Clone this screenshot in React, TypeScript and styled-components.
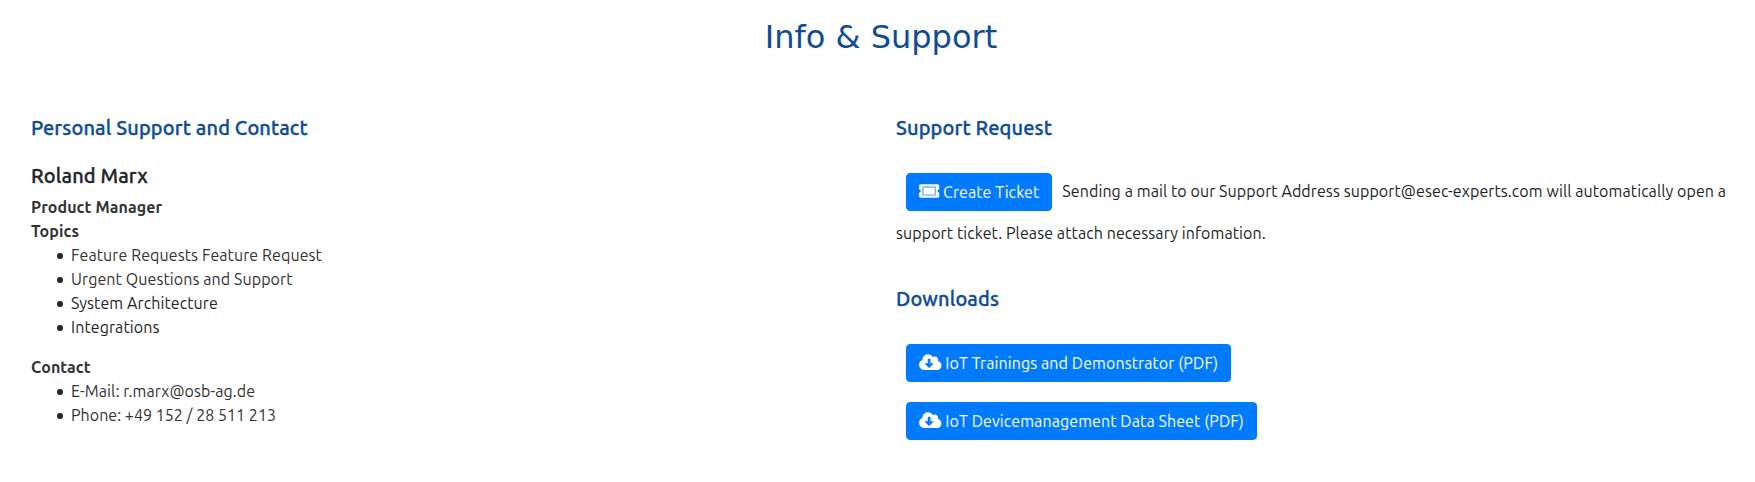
import React from "react";
import styled, { createGlobalStyle } from "styled-components";

const GlobalStyle = createGlobalStyle`
  *, *::before, *::after { box-sizing: border-box; }
  body {
    margin: 0;
    background: #fff;
    color: #212529;
    font: 400 16px/24px "Ubuntu", "Noto Sans", sans-serif;
    letter-spacing: 0.09px;
  }
`;

const Page = styled.main`
  min-height: 482px;
  padding: 17px 24px 0 31px;
`;

const Title = styled.h1`
  margin: 0 0 58px;
  color: #0f4c96;
  font: 400 32px/41px "DejaVu Sans", sans-serif;
  letter-spacing: 0;
  text-align: center;
`;

const Columns = styled.div`
  display: grid;
  grid-template-columns: 835px 835px;
  column-gap: 30px;
`;

const Column = styled.section``;

const SectionTitle = styled.h5<{ $gap?: number }>`
  margin: 0 0 ${(p) => p.$gap ?? 24}px;
  color: #0f4c96;
  font-size: 20px;
  font-weight: 500;
  line-height: 24px;
  letter-spacing: 0.12px;
  -webkit-text-stroke: 0.35px currentColor;
`;

const PersonName = styled(SectionTitle)`
  color: #212529;
`;

const Label = styled.div`
  color: #333;
  font-weight: 700;
`;

const List = styled.ul`
  margin: 0 0 16px;
  padding-left: 40px;
  list-style: none;
`;

const Item = styled.li`
  &::before {
    content: "";
    display: inline-block;
    width: 6px;
    height: 6px;
    margin: 0 8px 0 -14px;
    border-radius: 50%;
    background: #212529;
    vertical-align: 2px;
  }
`;

const Text = styled.span<{ $muted?: boolean; $numeric?: boolean }>`
  color: ${(p) => (p.$muted ? "#333" : "inherit")};
  letter-spacing: ${(p) => (p.$numeric ? "0.03px" : "inherit")};
`;

const Paragraph = styled.p`
  margin: 0 0 42px;
`;

const Button = styled.button`
  display: inline-block;
  height: 38px;
  margin: 10px;
  padding: 6px 12px;
  border: 1px solid #007bff;
  border-radius: 4px;
  background: #007bff;
  color: #fff;
  font: inherit;
  letter-spacing: inherit;
  vertical-align: -1px;
  white-space: nowrap;
`;

const Downloads = styled.div`
  display: flex;
  flex-direction: column;
  align-items: flex-start;
  & > button + button { margin-top: 10px; }
`;

const Icon = styled.svg`
  height: 18px;
  overflow: visible;
  vertical-align: -2px;
  fill: currentColor;
`;

const TicketIcon = () => (
  <Icon viewBox="0 0 576 512" width="20.25" aria-hidden="true">
    <path d="M128 160h320v192H128V160zm400 96c0 26.51 21.49 48 48 48v96c0 26.51-21.49 48-48 48H48c-26.51 0-48-21.49-48-48v-96c26.51 0 48-21.49 48-48s-21.49-48-48-48v-96c0-26.51 21.49-48 48-48h480c26.51 0 48 21.49 48 48v96c-26.51 0-48 21.49-48 48zm-48-104c0-13.255-10.745-24-24-24H120c-13.255 0-24 10.745-24 24v208c0 13.255 10.745 24 24 24h336c13.255 0 24-10.745 24-24V152z" />
    <path opacity="0.4" d="M96 128h384v256H96z" />
  </Icon>
);

const CloudDownloadIcon = () => (
  <Icon viewBox="0 0 640 512" width="22.5" aria-hidden="true">
    <path d="M537.6 226.6c4.1-10.7 6.4-22.4 6.4-34.6 0-53-43-96-96-96-19.7 0-38.1 6-53.3 16.2C367 64.2 315.3 32 256 32c-88.4 0-160 71.6-160 160 0 2.7.1 5.4.2 8.1C40.2 219.8 0 273.2 0 336c0 79.5 64.5 144 144 144h368c70.7 0 128-57.3 128-128 0-61.9-44-113.6-102.4-125.4zm-132.9 88.7L299.3 420.7c-6.2 6.2-16.4 6.2-22.6 0L171.3 315.3c-10.1-10.1-2.9-27.3 11.3-27.3H248V176c0-8.8 7.2-16 16-16h48c8.8 0 16 7.2 16 16v112h65.4c14.2 0 21.4 17.2 11.3 27.3z" />
  </Icon>
);

export default function App() {
  return (
    <>
      <GlobalStyle />
      <Page>
        <Title>Info &amp; Support</Title>
        <Columns>
          <Column>
            <SectionTitle>Personal Support and Contact</SectionTitle>
            <PersonName $gap={7}>Roland Marx</PersonName>
            <Label>Product Manager</Label>
            <Label>Topics</Label>
            <List>
              <Item><Text $muted>Feature Requests Feature Request</Text></Item>
              <Item><Text $muted>Urgent Questions and Support</Text></Item>
              <Item><Text>System Architecture</Text></Item>
              <Item><Text>Integrations</Text></Item>
            </List>
            <Label>Contact</Label>
            <List>
              <Item><Text $muted>E-Mail: r.marx@osb-ag.de</Text></Item>
              <Item><Text $muted $numeric>Phone: +49 152 / 28 511 213</Text></Item>
            </List>
          </Column>
          <Column>
            <SectionTitle $gap={23}>Support Request</SectionTitle>
            <Paragraph>
              <Button><TicketIcon /> Create Ticket</Button>
              <Text>Sending a mail to our Support Address support@esec-experts.com will automatically open a</Text>
              <br />
              <Text>support ticket. Please attach necessary infomation.</Text>
            </Paragraph>
            <SectionTitle $gap={23}>Downloads</SectionTitle>
            <Downloads>
              <Button><CloudDownloadIcon /> IoT Trainings and Demonstrator (PDF)</Button>
              <Button><CloudDownloadIcon /> IoT Devicemanagement Data Sheet (PDF)</Button>
            </Downloads>
          </Column>
        </Columns>
      </Page>
    </>
  );
}
